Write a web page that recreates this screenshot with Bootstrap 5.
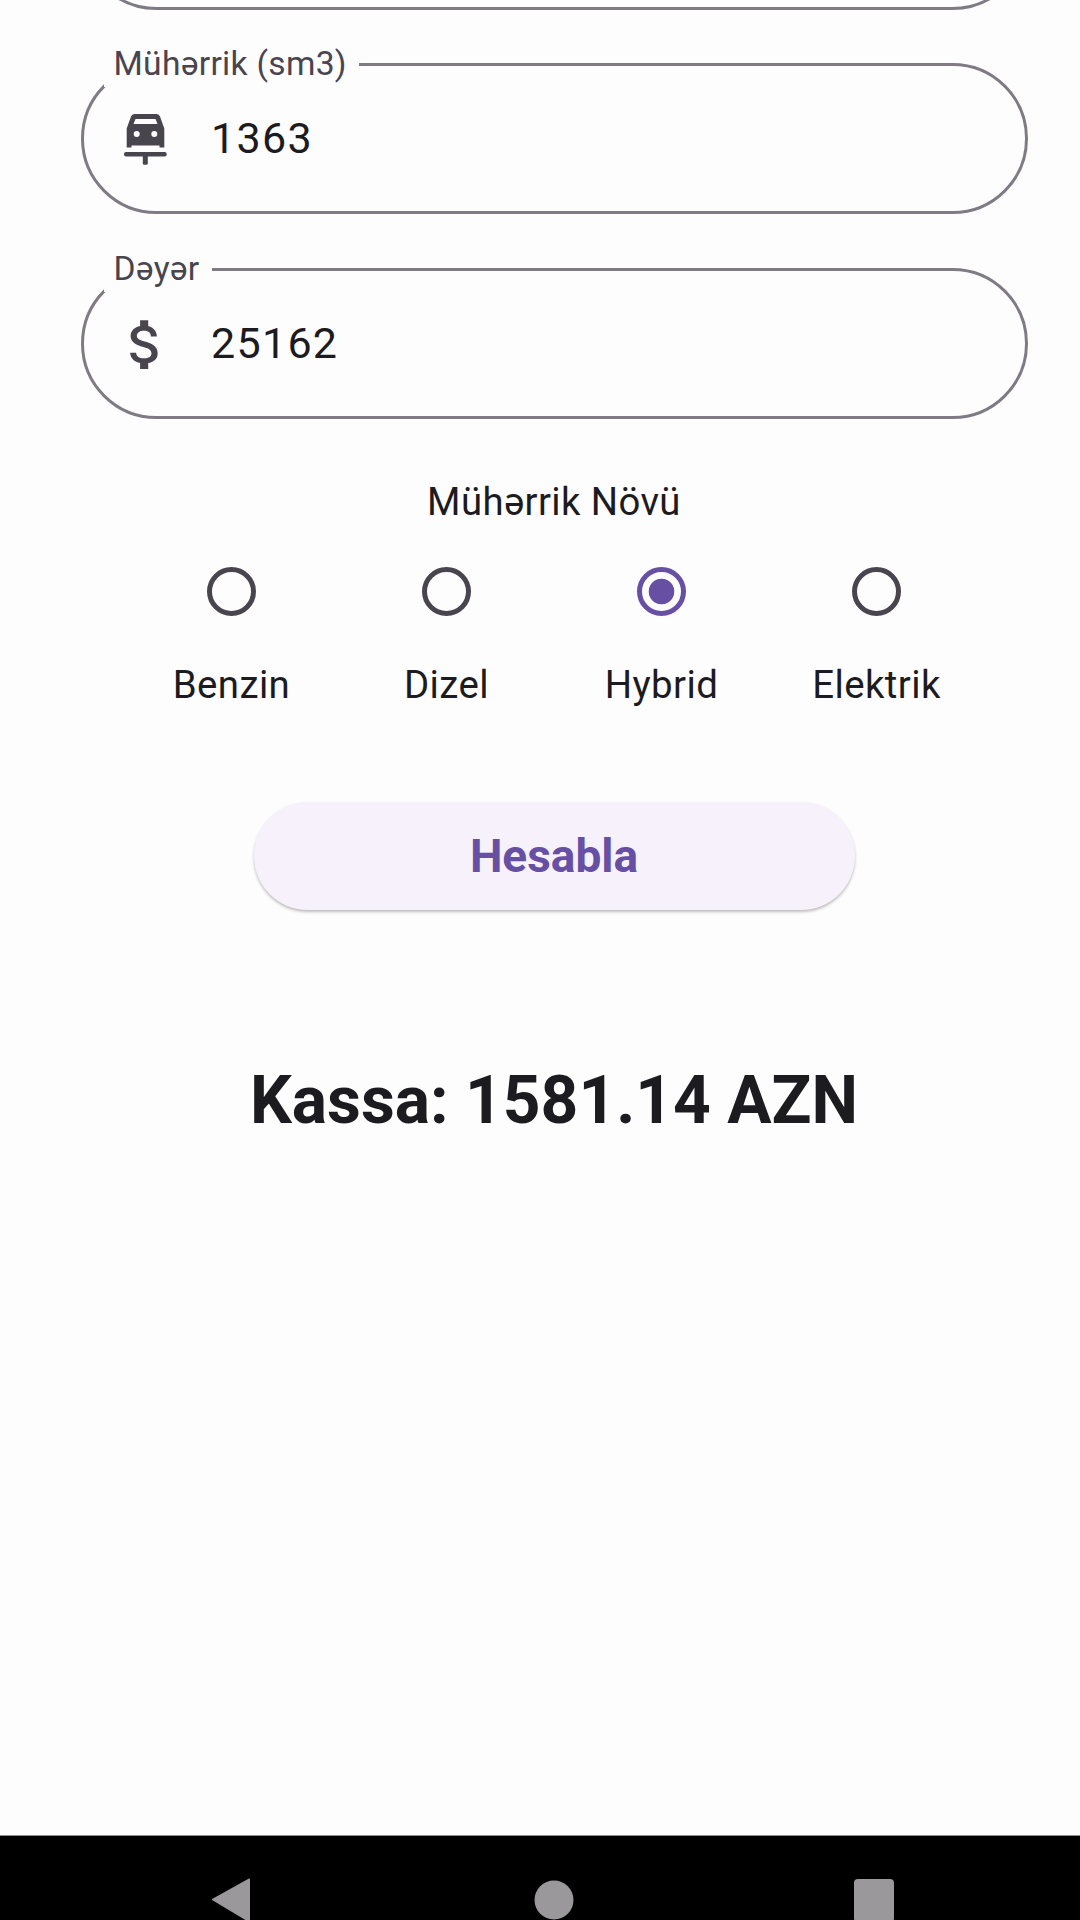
<!DOCTYPE html>
<html lang="az">
<head>
<meta charset="utf-8">
<title>Kassa</title>
<link href="https://cdn.jsdelivr.net/npm/bootstrap@5.3.0/dist/css/bootstrap.min.css" rel="stylesheet">
<style>
html, body { background: #fefdfe; }
body { font-family: Roboto, "Liberation Sans", sans-serif; color: #1c1b1f; }
.screen { height: 1920px; width: 1080px; overflow: hidden; background: #fefdfe; }
.form-area { margin-left: 80.5px; width: 947px; }
.pill-field { height: 151px; border: 3px solid #7f7a84; border-radius: 75.5px; margin-bottom: 53.5px; }
.pill-field.clipped { margin-top: -141.2px; }
.pill-label { top: -24px; left: 20px; height: 45px; padding: 2px 12px 0 10px; background: #fefdfe; color: #49454f; font-size: 33.6px; line-height: 39px; letter-spacing: .3px; white-space: nowrap; }
.icon-slot { width: 123.5px; }
.icon-slot svg { margin-top: 2px; }
.pill-value { font-size: 43px; line-height: 50px; letter-spacing: 1.3px; color: #1c1b1f; margin-left: 4px; margin-top: -1px; }
.group-title { font-size: 38.3px; line-height: 50px; margin-top: 57.8px; margin-bottom: 40.8px; letter-spacing: .4px; }
.radio-row { width: 860px; margin-left: 43.5px; }
.radio-col { width: 215px; }
.radio-col .form-check-input { width: 49px; height: 49px; margin: 0; border: 5.2px solid #49454f; background: transparent; box-shadow: none; float: none; }
.radio-col .form-check-input:checked { border-color: #6750a4; background: radial-gradient(circle, #6750a4 0 12.4px, transparent 13.2px); }
.radio-label { font-size: 38.4px; line-height: 50px; margin-top: 43.2px; letter-spacing: .4px; }
.calc-btn { width: 601px; height: 108px; margin-top: 92px; margin-left: 173px; border: 0; border-radius: 54px; background: #f6f1fb; color: #6750a4; font-weight: 700; font-size: 46px; line-height: 50px; box-shadow: 0 2px 3px rgba(0,0,0,.25); }
.calc-btn:hover, .calc-btn:active { background: #f6f1fb !important; color: #6750a4 !important; }
.total-line { font-size: 65.9px; line-height: 76px; font-weight: 700; margin-top: 153.5px; }
.sys-nav { height: 85px; background: #000; border-top: 1px solid #8d8b8e; overflow: hidden; padding-left: 70px; padding-top: 42px; }
.nav-slot { width: 322px; }
</style>
</head>
<body>
<div class="screen d-flex flex-column">
  <div class="form-area">
    <div class="pill-field clipped"></div>

    <div class="pill-field position-relative d-flex align-items-center">
      <span class="pill-label position-absolute">Mühərrik (sm3)</span>
      <div class="icon-slot d-flex justify-content-center">
        <svg width="43" height="51" viewBox="0 0 43 51" fill="#49454f" aria-hidden="true">
          <path fill-rule="evenodd" d="M10.5 0H32.5Q35.3 0 36 2.5L40.3 14.5V33.5H35.5V31.5H7.5V33.5H2.7V14.5L7 2.5Q7.7 0 10.5 0ZM11.5 5L9.5 10H33.5L31.5 5ZM12.7 17A3 3 0 1 0 12.7 23A3 3 0 1 0 12.7 17ZM30.3 17A3 3 0 1 0 30.3 23A3 3 0 1 0 30.3 17Z"/>
          <rect x="0" y="38" width="42.7" height="4.6" rx="2"/>
          <rect x="18.8" y="40" width="5" height="10.8" rx="1.6"/>
        </svg>
      </div>
      <div class="pill-value">1363</div>
    </div>

    <div class="pill-field position-relative d-flex align-items-center">
      <span class="pill-label position-absolute">Dəyər</span>
      <div class="icon-slot d-flex justify-content-center">
        <svg width="65" height="65" viewBox="0 0 24 24" fill="#49454f" aria-hidden="true">
          <path d="M11.8 10.9c-2.27-.59-3-1.2-3-2.15 0-1.09 1.01-1.85 2.7-1.85 1.78 0 2.44.85 2.5 2.1h2.21c-.07-1.72-1.12-3.3-3.21-3.81V3h-3v2.16c-1.94.42-3.5 1.68-3.5 3.61 0 2.31 1.91 3.46 4.7 4.13 2.5.6 3 1.48 3 2.41 0 .69-.49 1.79-2.7 1.79-2.06 0-2.87-.92-2.98-2.1h-2.2c.12 2.19 1.76 3.42 3.68 3.83V21h3v-2.15c1.95-.37 3.5-1.5 3.5-3.55 0-2.84-2.43-3.81-4.7-4.4z"/>
        </svg>
      </div>
      <div class="pill-value">25162</div>
    </div>

    <div class="group-title text-center">Mühərrik Növü</div>

    <div class="radio-row d-flex">
      <div class="radio-col d-flex flex-column align-items-center">
        <input class="form-check-input" type="radio" name="engine" aria-label="Benzin">
        <div class="radio-label">Benzin</div>
      </div>
      <div class="radio-col d-flex flex-column align-items-center">
        <input class="form-check-input" type="radio" name="engine" aria-label="Dizel">
        <div class="radio-label">Dizel</div>
      </div>
      <div class="radio-col d-flex flex-column align-items-center">
        <input class="form-check-input" type="radio" name="engine" aria-label="Hybrid" checked>
        <div class="radio-label">Hybrid</div>
      </div>
      <div class="radio-col d-flex flex-column align-items-center">
        <input class="form-check-input" type="radio" name="engine" aria-label="Elektrik">
        <div class="radio-label">Elektrik</div>
      </div>
    </div>

    <button type="button" class="btn calc-btn d-block p-0">Hesabla</button>

    <div class="total-line text-center">Kassa: 1581.14 AZN</div>
  </div>

  <div class="sys-nav mt-auto d-flex">
    <div class="nav-slot d-flex justify-content-center">
      <svg width="42" height="44" viewBox="0 0 42 44" fill="#9a989b" aria-hidden="true"><path d="M39 1.5 3 21.5 39 43Z" stroke="#9a989b" stroke-width="2" stroke-linejoin="round"/></svg>
    </div>
    <div class="nav-slot d-flex justify-content-center">
      <svg width="42" height="44" viewBox="0 0 42 44" fill="#9a989b" aria-hidden="true"><circle cx="22" cy="22" r="19.5"/></svg>
    </div>
    <div class="nav-slot d-flex justify-content-center">
      <svg width="42" height="44" viewBox="0 0 42 44" fill="#9a989b" aria-hidden="true"><rect x="0" y="1" width="40" height="43" rx="4"/></svg>
    </div>
  </div>
</div>
<script src="https://cdn.jsdelivr.net/npm/bootstrap@5.3.0/dist/js/bootstrap.bundle.min.js"></script>
</body>
</html>
